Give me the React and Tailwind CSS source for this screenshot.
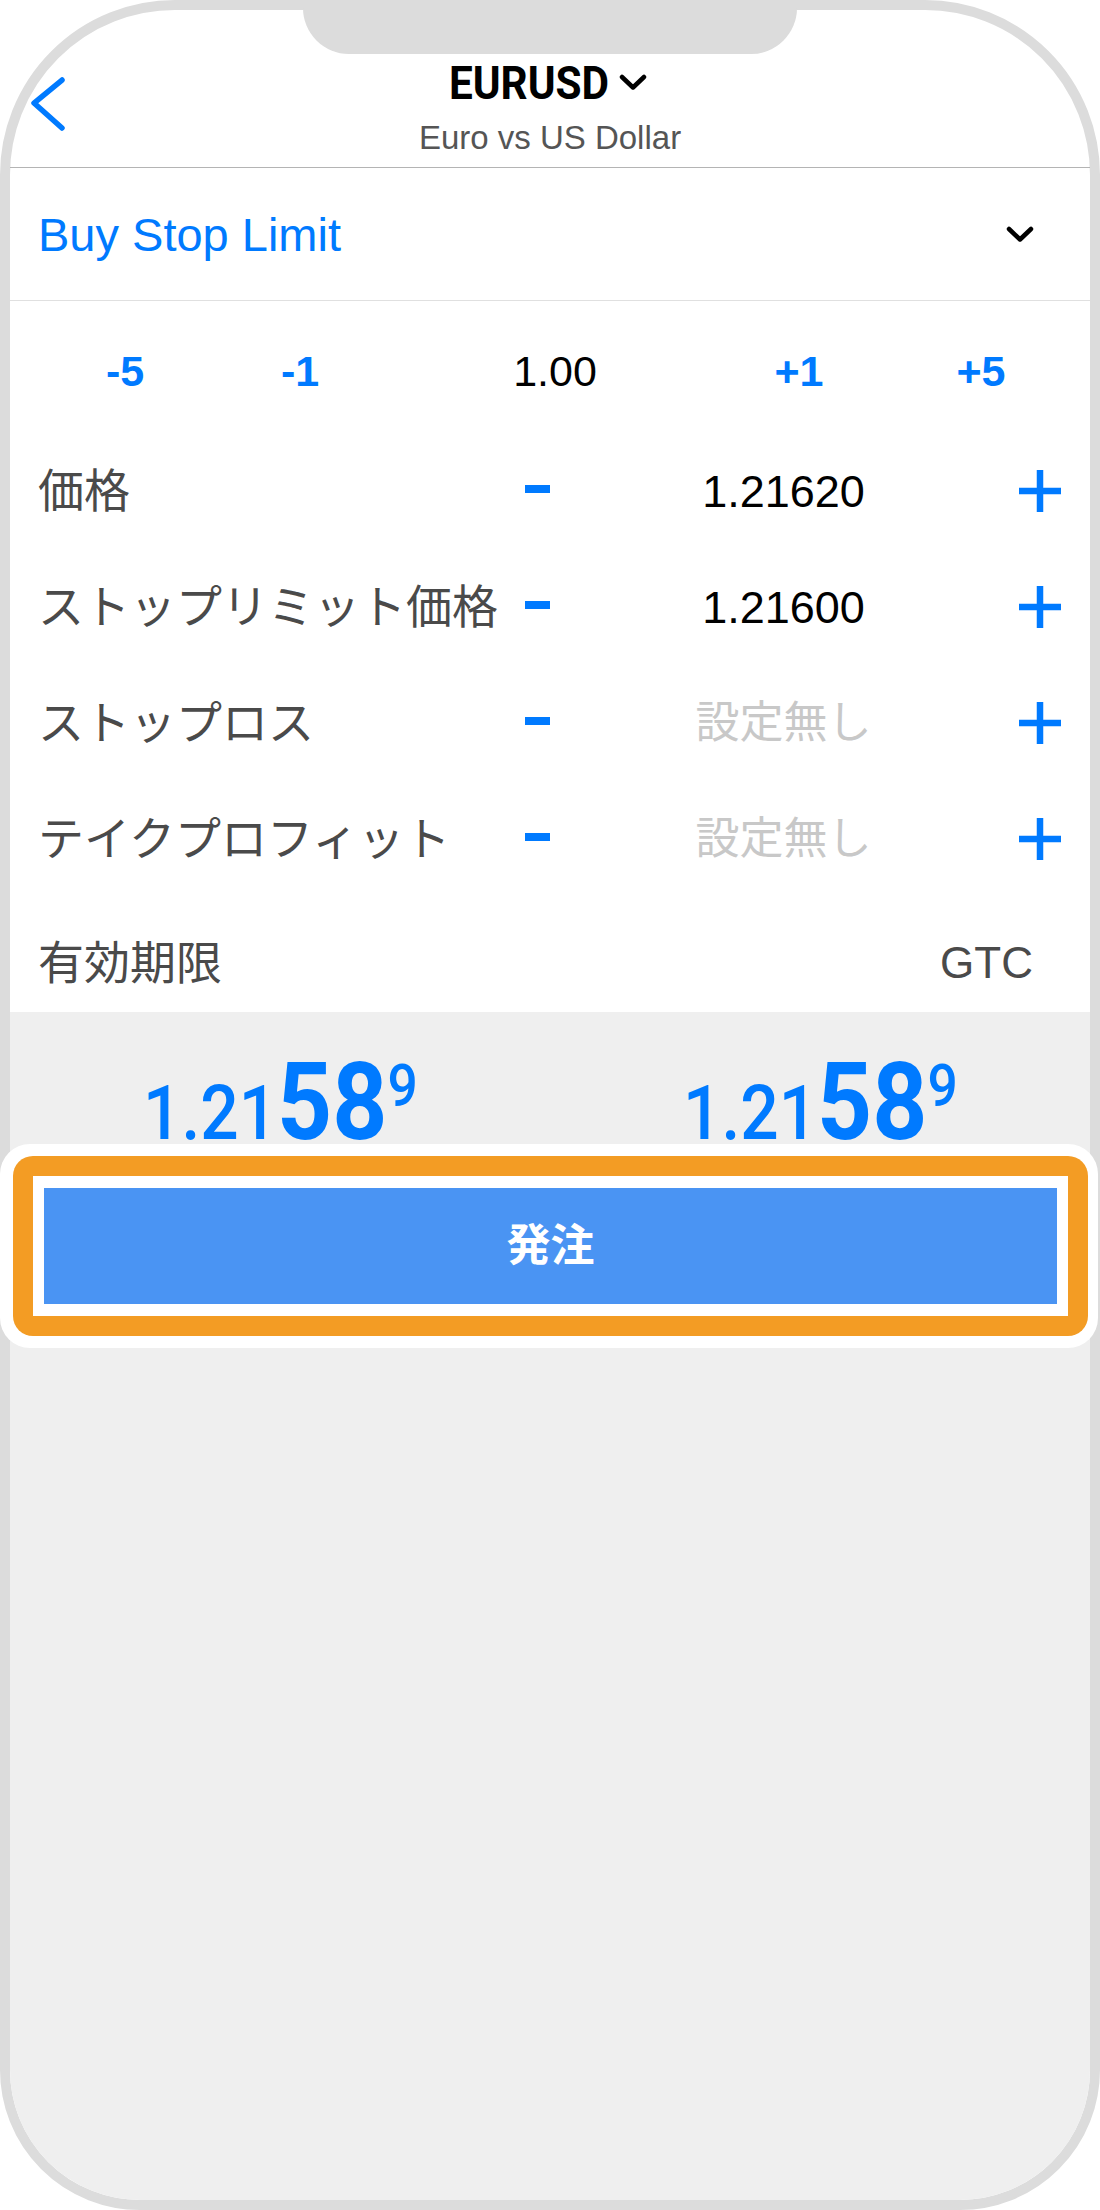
import React from "react";

const rows = [
  { label: "価格", value: "1.21620" },
  { label: "ストップリミット価格", value: "1.21600" },
  { label: "ストップロス", value: "設定無し", empty: true },
  { label: "テイクプロフィット", value: "設定無し", empty: true },
];

const PlusIcon = () => (
  <svg width="42" height="42" viewBox="0 0 42 42" className="block">
    <path d="M21 0V42M0 21H42" stroke="#007aff" strokeWidth="6.5" />
  </svg>
);

const Chevron = ({ className }) => (
  <svg width="28" height="17" viewBox="0 0 28 17" className={className}>
    <polyline points="3,3 14,13.5 25,3" fill="none" stroke="#000" strokeWidth="4.5" strokeLinecap="round" strokeLinejoin="round" />
  </svg>
);

const Price = () => (
  <div className="flex justify-center">
    <div className="flex scale-x-[0.89] items-baseline font-['Roboto',sans-serif] leading-none text-[#007aff]">
      <span className="text-[76px] font-medium">1.21</span>
      <span className="text-[108px] font-bold">58</span>
      <span className="mt-[8px] self-start text-[60px] font-medium">9</span>
    </div>
  </div>
);

export default function App() {
  return (
    <div className="w-[1100px] bg-white font-['Liberation_Sans','Noto_Sans_CJK_JP',sans-serif]">
      <div className="relative flex h-[2210px] w-[1100px] flex-col rounded-t-[175px] rounded-b-[140px] border-[10px] border-[#dcdcdc] bg-white">
        {/* notch */}
        <div className="absolute -top-[10px] left-[293px] h-[54px] w-[494px] rounded-b-[46px] bg-[#dcdcdc]" />

        {/* nav bar */}
        <div className="grid h-[158px] grid-cols-[1fr_auto_1fr] border-b border-[#b4b4b4]">
          <div className="pl-[16px] pt-[64px]">
            <svg width="40" height="60" viewBox="0 0 40 60" className="block">
              <polyline points="36,6 8,29 36,54" fill="none" stroke="#007aff" strokeWidth="5.5" strokeLinecap="round" strokeLinejoin="round" />
            </svg>
          </div>
          <div className="flex flex-col items-center pt-[49px]">
            <div className="flex items-center">
              <div className="flex w-[152px] justify-center">
                <span className="scale-x-[0.9] whitespace-nowrap font-['Roboto',sans-serif] text-[47px] font-bold leading-none text-black">
                  EURUSD
                </span>
              </div>
              <Chevron className="ml-[14px] block" />
            </div>
            <div className="mt-[15px] whitespace-nowrap text-[33px] leading-none text-[#555]">Euro vs US Dollar</div>
          </div>
          <div />
        </div>

        {/* order type */}
        <div className="flex h-[133px] items-center justify-between border-b border-[#e0e0e0] pl-[28px] pr-[56px]">
          <span className="text-[47px] leading-none text-[#007aff]">Buy Stop Limit</span>
          <Chevron className="block" />
        </div>

        {/* volume */}
        <div className="flex h-[132px] items-center pt-[8px] text-[43px] leading-none">
          <button className="ml-[65px] w-[100px] text-center font-bold text-[#007aff]">-5</button>
          <button className="ml-[75px] w-[100px] text-center font-bold text-[#007aff]">-1</button>
          <span className="ml-[155px] w-[100px] text-center text-black">1.00</span>
          <button className="ml-[144px] w-[100px] text-center font-bold text-[#007aff]">+1</button>
          <button className="ml-[82px] w-[100px] text-center font-bold text-[#007aff]">+5</button>
        </div>

        {rows.map((r) => (
          <div key={r.label} className="flex h-[116px] items-center">
            <div className="w-[487px] whitespace-nowrap pl-[28px] text-[46px] leading-none text-[#4a4a4a]">{r.label}</div>
            <div className="flex w-[80px] justify-center">
              <span className="mb-[4px] block h-[8px] w-[25px] bg-[#007aff]" />
            </div>
            <div
              className={
                r.empty
                  ? "w-[413px] text-center text-[44px] leading-none text-[#c8c8c8]"
                  : "w-[413px] text-center text-[45px] leading-none text-black"
              }
            >
              {r.value}
            </div>
            <div className="flex w-[100px] justify-center">
              <PlusIcon />
            </div>
          </div>
        ))}

        {/* expiry */}
        <div className="flex h-[115px] items-center justify-between pl-[28px] pr-[57px] pt-[17px] leading-none text-[#4a4a4a]">
          <span className="text-[46px]">有効期限</span>
          <span className="text-[44px]">GTC</span>
        </div>

        {/* quotes + order button */}
        <div className="flex-1 rounded-b-[130px] bg-[#efefef]">
          <div className="grid h-[132px] grid-cols-2 pt-[36px]">
            <Price />
            <Price />
          </div>
          <div className="-ml-[10px] -mr-[8px] rounded-[30px] bg-white py-[12px] pl-[13px] pr-[10px]">
            <div className="rounded-[20px] bg-[#f39c24] p-[20px]">
              <div className="bg-white px-[11px] py-[12px]">
                <button className="flex h-[116px] w-full items-center justify-center bg-[#4a94f3] text-[44px] font-bold leading-none text-white">
                  発注
                </button>
              </div>
            </div>
          </div>
        </div>
      </div>
    </div>
  );
}
